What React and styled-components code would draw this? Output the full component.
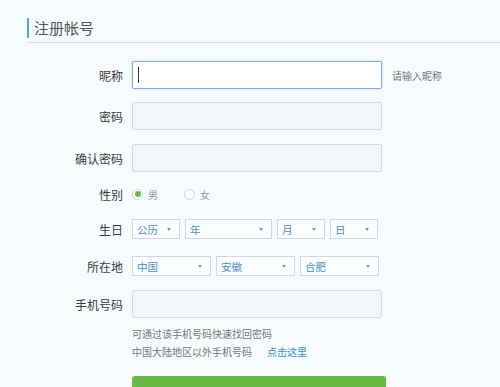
import React from 'react'
import styled, { createGlobalStyle } from 'styled-components'

const GlobalStyle = createGlobalStyle`
    html, body {
        margin: 0;
        padding: 0;
        background-color: #f6fbfe;
        font-family: "Noto Sans CJK SC", "Noto Sans", sans-serif;
        overflow: hidden;
    }
`

const birthday = [
    { text: '公历', width: 48 },
    { text: '年', width: 87 },
    { text: '月', width: 48 },
    { text: '日', width: 48 },
]

const location = [
    { text: '中国', width: 79 },
    { text: '安徽', width: 79 },
    { text: '合肥', width: 79 },
]

export default function App() {
    return (
        <>
            <GlobalStyle />
            <Page>
                <Header>
                    <Title>注册帐号</Title>
                </Header>
                <Form>
                    <Row $mt={18}>
                        <Label>昵称</Label>
                        <Field $focused>
                            <Caret />
                        </Field>
                        <Tip>请输入昵称</Tip>
                    </Row>
                    <Row $mt={13}>
                        <Label>密码</Label>
                        <Field />
                    </Row>
                    <Row $mt={14}>
                        <Label>确认密码</Label>
                        <Field />
                    </Row>
                    <Row $mt={12} $h={20}>
                        <Label>性别</Label>
                        <Radios>
                            <Radio>
                                <Circle $checked />
                                男
                            </Radio>
                            <Radio>
                                <Circle />
                                女
                            </Radio>
                        </Radios>
                    </Row>
                    <Row $mt={15} $h={20}>
                        <Label>生日</Label>
                        <Selects>
                            {birthday.map(s => (
                                <Select key={s.text} style={{ width: s.width }}>
                                    {s.text}
                                    <Arrow />
                                </Select>
                            ))}
                        </Selects>
                    </Row>
                    <Row $mt={17} $h={20}>
                        <Label>所在地</Label>
                        <Selects>
                            {location.map(s => (
                                <Select key={s.text} style={{ width: s.width }}>
                                    {s.text}
                                    <Arrow />
                                </Select>
                            ))}
                        </Selects>
                    </Row>
                    <Row $mt={14}>
                        <Label>手机号码</Label>
                        <Field />
                    </Row>
                    <Notes>
                        <Note>可通过该手机号码快速找回密码</Note>
                        <Note>
                            中国大陆地区以外手机号码
                            <Link>点击这里</Link>
                        </Note>
                    </Notes>
                    <Submit />
                </Form>
            </Page>
        </>
    )
}

const Page = styled.div`
    width: 500px;
    height: 387px;
    overflow: hidden;
`
const Header = styled.div`
    margin-left: 27px;
    padding-top: 18px;
    padding-bottom: 4px;
    border-bottom: 1px solid #d6dde2;
`
const Title = styled.h2`
    margin: 0;
    height: 20px;
    line-height: 20px;
    padding-left: 5px;
    border-left: 2px solid #4ea6d4;
    font-size: 15px;
    font-weight: normal;
    color: #555;
`
const Form = styled.div`
    display: flex;
    flex-direction: column;
`
const Row = styled.div`
    display: flex;
    align-items: center;
    height: ${props => props.$h || 28}px;
    margin-top: ${props => props.$mt}px;
`
const Label = styled.label`
    width: 123px;
    margin-right: 9px;
    text-align: right;
    font-size: 12px;
    color: #3a3a3a;
`
const Field = styled.div`
    box-sizing: border-box;
    width: 250px;
    height: 28px;
    display: flex;
    align-items: center;
    padding-left: 5px;
    border: 1px solid ${props => props.$focused ? '#7ea9e2' : '#d3dae0'};
    border-radius: 2px;
    background-color: ${props => props.$focused ? '#ffffff' : '#f3f6f9'};
    box-shadow: ${props => props.$focused ? '0 0 2px rgba(90, 140, 220, 0.45)' : 'none'};
`
const Caret = styled.span`
    width: 1px;
    height: 16px;
    background-color: #333;
`
const Tip = styled.span`
    margin-left: 10px;
    font-size: 10px;
    color: #777;
`
const Radios = styled.div`
    display: flex;
    gap: 26px;
`
const Radio = styled.span`
    display: flex;
    align-items: center;
    gap: 5px;
    font-size: 10px;
    color: #999;
`
const Circle = styled.span`
    position: relative;
    box-sizing: border-box;
    width: 11px;
    height: 11px;
    border-radius: 50%;
    border: 1px solid #cfd4d8;
    background-color: #fff;
    &:after {
        content: "";
        display: ${props => props.$checked ? 'block' : 'none'};
        position: absolute;
        left: 1.5px;
        top: 1.5px;
        width: 6px;
        height: 6px;
        border-radius: 50%;
        background-color: #5ec14a;
    }
`
const Selects = styled.div`
    display: flex;
    gap: 5px;
`
const Select = styled.div`
    box-sizing: border-box;
    height: 20px;
    display: flex;
    align-items: center;
    justify-content: space-between;
    padding: 0 8px 0 4px;
    border: 1px solid #d1d9df;
    background-color: #fbfdfe;
    font-size: 10.5px;
    color: #4a8dc6;
`
const Arrow = styled.span`
    width: 0;
    height: 0;
    border-left: 2.5px solid transparent;
    border-right: 2.5px solid transparent;
    border-top: 3px solid #88929a;
`
const Notes = styled.div`
    margin-top: 7px;
    margin-left: 132px;
    display: flex;
    flex-direction: column;
`
const Note = styled.div`
    height: 18px;
    line-height: 18px;
    font-size: 10px;
    color: #777;
`
const Link = styled.a`
    margin-left: 15px;
    color: #3b8ed0;
    text-decoration: none;
`
const Submit = styled.div`
    margin-top: 15px;
    margin-left: 132px;
    width: 254px;
    height: 30px;
    border-radius: 3px 3px 0 0;
    background-color: #69bb45;
`
